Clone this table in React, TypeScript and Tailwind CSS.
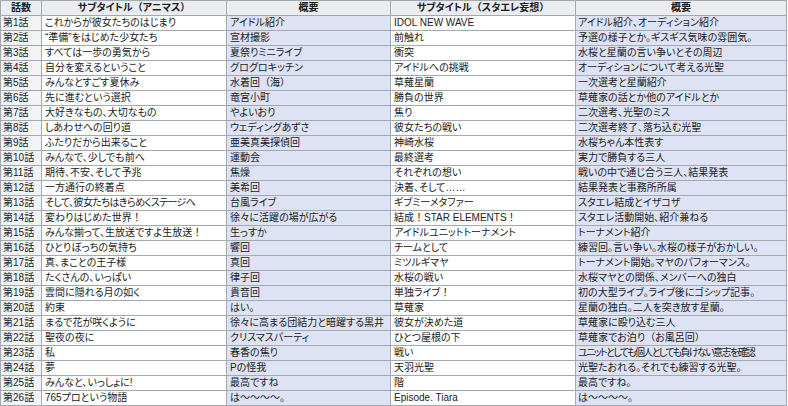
import React from 'react';

type Row = [string, string, string, string];

const rows: Row[] = [
  ['これからが彼女たちのはじまり', 'アイドル紹介', 'IDOL NEW WAVE', 'アイドル紹介、オーディション紹介'],
  ['“準備”をはじめた少女たち', '宣材撮影', '前触れ', '予選の様子とか。ギスギス気味の雰囲気。'],
  ['すべては一歩の勇気から', '夏祭りミニライブ', '衝突', '水桜と星蘭の言い争いとその周辺'],
  ['自分を変えるということ', 'グログロキッチン', 'アイドルへの挑戦', 'オーディションについて考える光聖'],
  ['みんなとすごす夏休み', '水着回（海）', '草薙星蘭', '一次選考と星蘭紹介'],
  ['先に進むという選択', '竜宮小町', '勝負の世界', '草薙家の話とか他のアイドルとか'],
  ['大好きなもの、大切なもの', 'やよいおり', '焦り', '二次選考、光聖のミス'],
  ['しあわせへの回り道', 'ウェディングあずさ', '彼女たちの戦い', '二次選考終了、落ち込む光聖'],
  ['ふたりだから出来ること', '亜美真美探偵回', '神崎水桜', '水桜ちゃん本性表す'],
  ['みんなで、少しでも前へ', '運動会', '最終選考', '実力で勝負する三人'],
  ['期待、不安、そして予兆', '焦燥', 'それぞれの想い', '戦いの中で通じ合う三人、結果発表'],
  ['一方通行の終着点', '美希回', '決着、そして……', '結果発表と事務所所属'],
  ['そして、彼女たちはきらめくステージへ', '台風ライブ', 'ギブミーメタファー', 'スタエレ結成とイザコザ'],
  ['変わりはじめた世界！', '徐々に活躍の場が広がる', '結成！STAR ELEMENTS！', 'スタエレ活動開始、紹介兼ねる'],
  ['みんな揃って、生放送ですよ生放送！', '生っすか', 'アイドルユニットトーナメント', 'トーナメント紹介'],
  ['ひとりぼっちの気持ち', '響回', 'チームとして', '練習回。言い争い。水桜の様子がおかしい。'],
  ['真、まことの王子様', '真回', 'ミツルギマヤ', 'トーナメント開始。マヤのパフォーマンス。'],
  ['たくさんの、いっぱい', '律子回', '水桜の戦い', '水桜マヤとの関係、メンバーへの独白'],
  ['雲間に隠れる月の如く', '貴音回', '単独ライブ！', '初の大型ライブ。ライブ後にゴシップ記事。'],
  ['約束', 'はい。', '草薙家', '星蘭の独白。二人を突き放す星蘭。'],
  ['まるで花が咲くように', '徐々に高まる団結力と暗躍する黒井', '彼女が決めた道', '草薙家に殴り込む三人'],
  ['聖夜の夜に', 'クリスマスパーティ', 'ひとつ屋根の下', '草薙家でお泊り（お風呂回）'],
  ['私', '春香の焦り', '戦い', 'ユニットとしても個人としても負けない意志を確認'],
  ['夢', 'Pの怪我', '天羽光聖', '光聖たおれる。それでも練習する光聖。'],
  ['みんなと、いっしょに!', '最高ですね', '階', '最高ですね。'],
  ['765プロという物語', 'は～～～～。', 'Episode. Tiara', 'は～～～～。'],
];

// the original font sets these kana-heavy lines narrower than Noto does
const tight: Record<string, string> = {
  'ユニットとしても個人としても負けない意志を確認': 'tracking-[-1.6px]',
  'そして、彼女たちはきらめくステージへ': 'tracking-[-0.6px]',
};

const font =
  "font-['Liberation_Sans','Noto_Sans_CJK_JP',sans-serif] [font-feature-settings:'palt']";

const cell = 'h-[15px] border-r border-b border-[#a2a9b1] flex items-center overflow-hidden whitespace-nowrap';

// full-width brackets and marks keep their full width, as in the original font
function Jp({ text }: { text: string }) {
  const parts = text.split(/([（）！])/);
  return (
    <span className={tight[text] ?? ''}>
      {parts.map((p, i) =>
        /^[（）！]$/.test(p) ? (
          <span key={i} className="[font-feature-settings:normal]">
            {p}
          </span>
        ) : (
          p
        ),
      )}
    </span>
  );
}

export default function App() {
  return (
    <div className={`bg-white w-[788px] h-[406px] overflow-hidden ${font} text-[10px] leading-[14px] text-[#202122]`}>
      <div className="grid grid-cols-[41px_185px_164px_185px_211px] w-[787px] border-l border-t border-[#a2a9b1]">
        {['話数', 'サブタイトル（アニマス）', '概要', 'サブタイトル（スタエレ妄想）', '概要'].map((h, i) => (
          <div key={i} className={`${cell} justify-center bg-[#eaecf0] font-bold`}>
            <Jp text={h} />
          </div>
        ))}
        {rows.map((r, i) => (
          <React.Fragment key={i}>
            <div className={`${cell} bg-[#f2f3f5] pl-[2px]`}>第{i + 1}話</div>
            <div className={`${cell} bg-white pl-[3px]`}>
              <Jp text={r[0]} />
            </div>
            <div className={`${cell} bg-[#dde3f4] pl-[3px]`}>
              <Jp text={r[1]} />
            </div>
            <div className={`${cell} bg-white pl-[3px]`}>
              <Jp text={r[2]} />
            </div>
            <div className={`${cell} bg-[#dde3f4] pl-[2px]`}>
              <Jp text={r[3]} />
            </div>
          </React.Fragment>
        ))}
      </div>
    </div>
  );
}
